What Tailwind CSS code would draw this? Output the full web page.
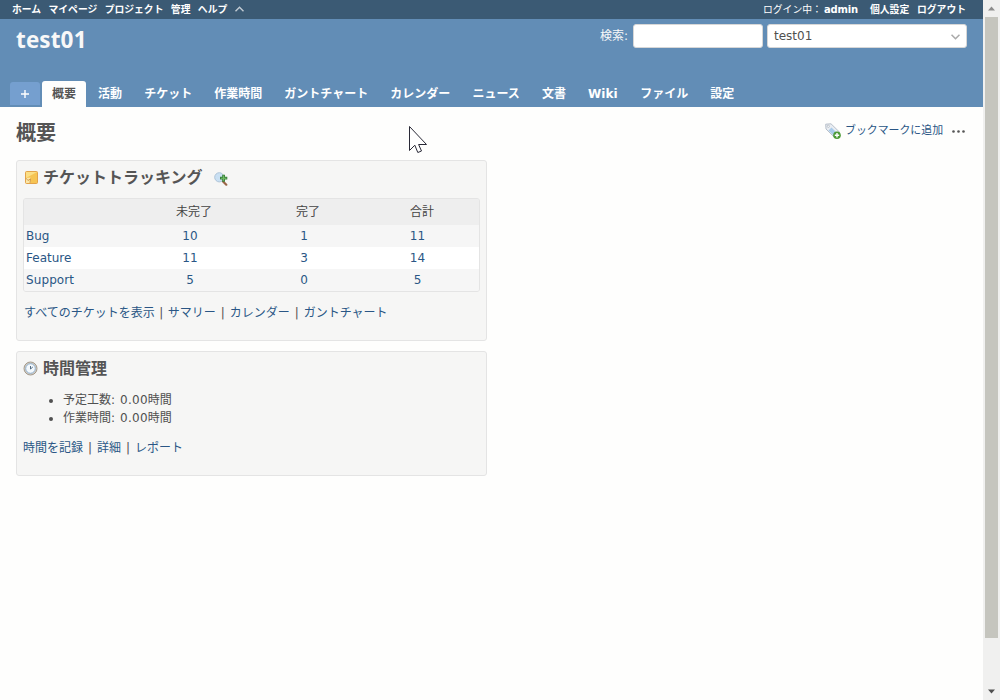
<!DOCTYPE html>
<html lang="ja">
<head>
<meta charset="utf-8">
<title>test01 - Redmine</title>
<script src="https://cdn.jsdelivr.net/npm/@tailwindcss/browser@4"></script>
</head>
<body class="flex h-[700px] w-[1000px] overflow-hidden bg-[#fefefd] font-['DejaVu_Sans','Noto_Sans_CJK_JP',sans-serif] text-[12px] leading-[18px] text-[#505050]">
<div class="flex w-[983px] flex-col">
  <nav class="flex h-[19px] items-center justify-between bg-[#3b5a74] pr-[17px] pl-3 font-['Open_Sans','Noto_Sans_CJK_JP',sans-serif] text-[9.8px] leading-4 font-bold whitespace-nowrap text-white">
    <div class="flex h-4 gap-[7.400px]">
      <a>ホーム</a><a>マイページ</a><a>プロジェクト</a><a>管理</a><a>ヘルプ</a>
      <svg class="mt-[4px] h-[6px] w-[9px]" viewBox="0 0 9 6" fill="none" stroke="#c3ccd4" stroke-width="1.4"><path d="M.5 5.2 4.5 1.2 8.500 5.200"/></svg>
    </div>
    <div class="flex h-4">
      <span class="w-[61px] font-normal">ログイン中：</span><a class="w-[46px] font-['DejaVu_Sans'] text-[10px] tracking-[-0.2px]">admin</a><a class="w-[47px]">個人設定</a><a>ログアウト</a>
    </div>
  </nav>
  <header class="flex h-[88px] flex-col justify-between bg-[#628db6]">
    <div class="flex h-[40px] items-start justify-between pt-[5px] pr-4 pl-4">
      <h1 class="mt-[-1px] font-['Open_Sans'] text-[22.5px] leading-[34px] font-bold tracking-[0.15px] text-[#f8f8f8]">test01</h1>
      <div class="flex items-center">
        <label class="mr-[5px] text-[#f8f8f8]">検索:</label>
        <div class="mr-[4px] h-6 w-[130px] rounded-[3px] border border-[#d7d7d7] bg-white"></div>
        <div class="flex h-6 w-[200px] items-center justify-between rounded-[3px] border border-[#d7d7d7] bg-white pr-[6px] pl-[6px]">
          <span>test01</span>
          <svg class="mt-[2px] h-[6px] w-[9px]" viewBox="0 0 9 6" fill="none" stroke="#aaa" stroke-width="1.6"><path d="M.5 .7 4.500 4.700 8.500 .7"/></svg>
        </div>
      </div>
    </div>
    <div class="flex h-[26px] items-start gap-[2px] pl-[10px] font-bold whitespace-nowrap text-white">
      <div class="mt-[1px] flex h-[23px] w-[30px] items-center justify-center rounded-t-[3px] bg-[#759fcf]"><svg class="size-[8px]" viewBox="0 0 8 8" stroke="#fff" stroke-width="1.4"><path d="M0 4H8M4 0V8"/></svg></div>
      <div class="h-[26px] rounded-t-[3px] bg-[#fefefd] px-[10px] leading-[27px] text-[#555]">概要</div>
      <div class="flex gap-[22.100px] pl-[10px] leading-[27px]">
        <a>活動</a><a>チケット</a><a>作業時間</a><a>ガントチャート</a><a>カレンダー</a><a>ニュース</a><a>文書</a><a class="w-[30px]">Wiki</a><a>ファイル</a><a>設定</a>
      </div>
    </div>
  </header>
  <main class="px-4 pt-[10px]">
    <div class="flex h-[43px] items-start justify-between">
      <h2 class="text-[20px] leading-[32px] font-bold text-[#555]">概要</h2>
      <div class="mt-[4px] flex items-center text-[#2a5685]">
        <svg class="mr-[4px] size-4" viewBox="0 0 16 16"><path d="M.7 1.2 6 .8 15 9.600 9.800 14.700 1 6Z" fill="#e9edf2" stroke="#b7bfca" stroke-width="1"/><path d="m6.500 4.500 5 5-3 3-5-5Z" fill="#a9cbe9"/><circle cx="3.300" cy="3.300" r="1.100" fill="#fff" stroke="#a9b0ba" stroke-width=".7"/><circle cx="12" cy="12.200" r="3.800" fill="#4c9a36"/><path d="M9.800 12.200h4.400M12 10v4.400" stroke="#fff" stroke-width="1.400"/></svg>
        <a class="mt-px w-[98px] text-[10.9px] whitespace-nowrap">ブックマークに追加</a>
        <svg class="mt-[2px] mr-[2px] ml-[9px] h-[3px] w-[13px]" viewBox="0 0 13 3" fill="#555"><circle cx="1.500" cy="1.500" r="1.300"/><circle cx="6.500" cy="1.500" r="1.300"/><circle cx="11.500" cy="1.500" r="1.300"/></svg>
      </div>
    </div>
    <section class="mb-[10px] h-[181px] w-[471px] rounded-[3px] border border-[#e4e4e4] bg-[#f6f6f5] px-[6px] pt-[3px]">
      <h3 class="flex h-[26px] items-center text-[16px] font-bold text-[#555]">
        <svg class="mr-[5px] ml-[2px] size-[13px]" viewBox="0 0 13 13"><rect x=".5" y=".5" width="12" height="12" rx="1" fill="#f6c453" stroke="#e3a34a"/><path d="M1 1h11L1 7Z" fill="#fbdf86"/><path d="M1 7 5.500 6.500V12H1Z" fill="#fbe7a8"/><path d="M1 7.200 3 9.500 5.500 7.800 5 12" fill="none" stroke="#c98a3a" stroke-width=".8"/></svg>
        <span class="mt-[2px] w-[171px] whitespace-nowrap">チケットトラッキング</span>
        <svg class="mt-[3px] size-[14px]" viewBox="0 0 14 14"><path d="m8.800 9.200 3.500 3.500" stroke="#9a6547" stroke-width="2.200" stroke-linecap="round"/><circle cx="5.300" cy="5.300" r="4.600" fill="#c9e0f3" stroke="#afc4d8"/><path d="M6 6.200h7.300M9.600 2.700v7" stroke="#39813a" stroke-width="2.800"/><path d="M7 6.200h5.400M9.600 3.600v5.200" stroke="#72bd65" stroke-width="1.100"/></svg>
      </h3>
      <div class="mt-[8px] h-[94px] overflow-hidden rounded-[3px] border border-[#e4e4e4] text-[#2a5685]">
        <div class="grid h-[26px] grid-cols-[113px_114px_114px_114px] items-center bg-[#eee] text-center text-[#444]"><span></span><span>未完了</span><span>完了</span><span>合計</span></div>
        <div class="grid h-[22px] grid-cols-[107px_114px_114px_113px] items-center bg-[#f6f6f6] pl-[2px] text-center"><a class="text-left">Bug</a><a>10</a><a>1</a><a>11</a></div>
        <div class="grid h-[22px] grid-cols-[107px_114px_114px_113px] items-center bg-white pl-[2px] text-center"><a class="text-left">Feature</a><a>11</a><a>3</a><a>14</a></div>
        <div class="grid h-[22px] grid-cols-[107px_114px_114px_113px] items-center bg-[#f6f6f6] pl-[2px] text-center"><a class="text-left tracking-[0.1px]">Support</a><a>5</a><a>0</a><a>5</a></div>
      </div>
      <p class="mt-[12px] flex whitespace-nowrap text-[#2a5685]"><a class="pl-px">すべてのチケットを表示</a><span class="w-[13px] text-center text-[#505050]">|</span><a>サマリー</a><span class="w-[14px] text-center text-[#505050]">|</span><a>カレンダー</a><span class="w-[14px] text-center text-[#505050]">|</span><a>ガントチャート</a></p>
    </section>
    <section class="h-[125px] w-[471px] rounded-[3px] border border-[#e4e4e4] bg-[#f6f6f5] px-[6px] pt-[3px]">
      <h3 class="flex h-[26px] items-center text-[16px] font-bold text-[#555]">
        <svg class="mt-px mr-[5px] size-[15px]" viewBox="0 0 15 15"><circle cx="7.500" cy="7.500" r="6.500" fill="#d4cec4" stroke="#a39a8d"/><circle cx="7.500" cy="7.500" r="4.800" fill="#f4f9fd" stroke="#8fb0cf"/><path d="M7.500 8V5M7.500 8l2.300-2" stroke="#526c84" fill="none"/></svg>
        <span class="mt-px">時間管理</span>
      </h3>
      <ul class="mt-[10px] list-disc pl-[40px]"><li>予定工数:<span class="ml-[5px] tracking-[0.25px]">0.00</span>時間</li><li>作業時間:<span class="ml-[5px] tracking-[0.25px]">0.00</span>時間</li></ul>
      <p class="mt-[12px] flex whitespace-nowrap text-[#2a5685]"><a>時間を記録</a><span class="w-[14px] text-center text-[#505050]">|</span><a>詳細</a><span class="w-[14px] text-center text-[#505050]">|</span><a>レポート</a></p>
    </section>
  </main>
</div>
<aside class="flex w-[17px] flex-col items-center bg-[#f0f0ef]">
  <svg class="mt-[6px] h-[5px] w-[7px]" viewBox="0 0 7 5" fill="#8c8c8c"><path d="M0 4.500 3.500 .5 7 4.500Z"/></svg>
  <div class="mt-[6px] h-[621px] w-[13px] bg-[#c5c5be]"></div>
  <svg class="mt-[51px] h-[5px] w-[7px]" viewBox="0 0 7 5" fill="#505050"><path d="M0 .5 3.500 4.500 7 .5Z"/></svg>
</aside>
<svg class="absolute top-[125px] left-[408px] h-[30px] w-[20px]" viewBox="0 0 20 30" fill="#fff" stroke="#292936" stroke-width="1"><path d="M1.500 1.500V25.500L6.800 20.200 9.800 27.500 13.500 26 10.600 19.500H18.500Z"/></svg>
</body>
</html>
